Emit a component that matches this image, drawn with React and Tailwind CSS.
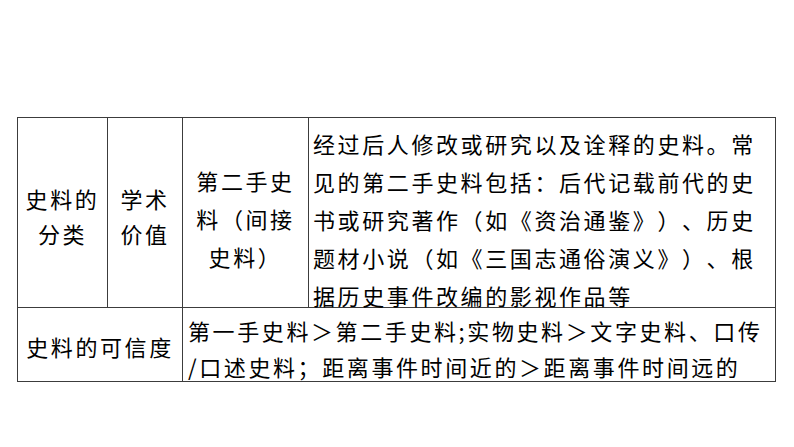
import React from "react";

const font = { fontFamily: '"Noto Sans CJK SC", "Noto Sans", sans-serif' };

const detailLines = [
  "经过后人修改或研究以及诠释的史料。常",
  "见的第二手史料包括：后代记载前代的史",
  "书或研究著作（如《资治通鉴》）、历史",
  "题材小说（如《三国志通俗演义》）、根",
  "据历史事件改编的影视作品等",
];

const credLines = [
  "第一手史料＞第二手史料;实物史料＞文字史料、口传",
  "/口述史料；距离事件时间近的＞距离事件时间远的",
];

export default function App() {
  return (
    <div
      className="w-[794px] h-[447px] bg-white pt-[117px] pl-[17px] text-black text-[22px] tracking-[2.6px] [text-spacing-trim:space-all]"
      style={font}
    >
      <div className="grid w-[759px] grid-cols-[89px_74px_125px_466px] grid-rows-[189px_73px] gap-px bg-[#3c3c3c] p-px">
        {/* row 1 */}
        <div className="flex items-center justify-center bg-white pt-[6px] text-center leading-[35px]">
          <div>
            史料的
            <br />
            分类
          </div>
        </div>
        <div className="flex items-center justify-center bg-white pt-[6px] text-center leading-[35px]">
          <div>
            学术
            <br />
            价值
          </div>
        </div>
        <div className="flex items-center justify-center bg-white pt-[10px] text-center leading-[38px]">
          <div>
            第二手史
            <br />
            料（间接
            <br />
            史料）
          </div>
        </div>
        <div className="bg-white pl-[4px] pt-[6px] leading-[38px] whitespace-nowrap">
          {detailLines.map((line, i) => (
            <div key={i}>{line}</div>
          ))}
        </div>

        {/* row 2 */}
        <div className="col-span-2 flex items-center justify-center bg-white pt-[4px]">
          史料的可信度
        </div>
        <div className="col-span-2 flex flex-col justify-center bg-white pl-[5px] pt-[6px] leading-[36px] whitespace-nowrap">
          {credLines.map((line, i) => (
            <div key={i}>{line}</div>
          ))}
        </div>
      </div>
    </div>
  );
}
